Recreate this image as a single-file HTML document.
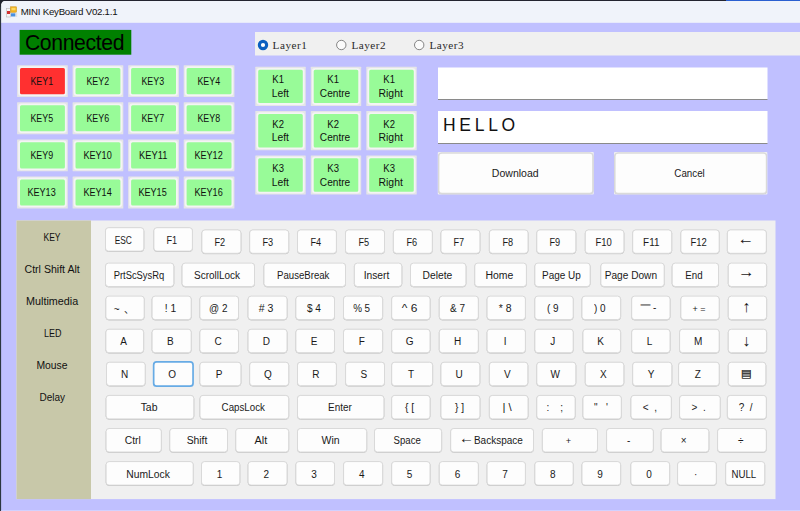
<!DOCTYPE html>
<html><head><meta charset="utf-8"><title>MINI KeyBoard V02.1.1</title>
<style>
html,body{margin:0;padding:0;}
body{width:800px;height:511px;overflow:hidden;position:relative;background:#c0c0ff;font-family:"Liberation Sans","Noto Sans CJK SC",sans-serif;font-size:10px;color:#111;}
div{box-sizing:border-box;}
.abs{position:absolute;}
#shapes{position:absolute;left:0;top:0;}
#ttext{left:20.8px;top:5.6px;font-size:9.7px;line-height:12px;color:#111;white-space:nowrap;letter-spacing:-0.25px;}
#conn{left:19.5px;top:30px;width:111.5px;height:24.5px;color:#000;font-size:21.2px;line-height:26.4px;white-space:nowrap;padding-left:5.4px;letter-spacing:-0.36px;overflow:hidden;}
.rl{position:absolute;top:38.5px;font-family:"Liberation Serif",serif;font-size:11.2px;line-height:13px;color:#2a2a2a;white-space:nowrap;letter-spacing:0.5px;}
.gk{position:absolute;display:flex;align-items:center;justify-content:center;text-align:center;color:#101010;padding:1.6px 1.2px 0 0;font-size:10px;line-height:13.9px;white-space:nowrap;}
.wb{position:absolute;padding-right:2px;display:flex;align-items:center;justify-content:center;font-size:10px;color:#1a1a1a;white-space:nowrap;}
.sl{position:absolute;left:15px;width:74.5px;text-align:center;font-size:10px;line-height:12px;color:#111;white-space:nowrap;}
.k{position:absolute;padding:2.2px 2.4px 0 0;display:flex;align-items:center;justify-content:center;font-size:10px;color:#1a1a1a;white-space:nowrap;line-height:12px;}
.k b{font-weight:normal;display:inline-block;line-height:0;position:relative;}
.ar{font-size:16.5px;top:-4.7px;}
.av{font-size:16px;top:-1.6px;}
.ab{font-size:15px;top:-3.2px;}
.mn{font-family:"DejaVu Sans",sans-serif;font-size:11px;color:#3a3a3a;top:-1px;left:0.4px;text-shadow:0 0.45px 0 #666,0 -0.45px 0 #666;}
</style></head><body>
<svg id="shapes" width="800" height="511" viewBox="0 0 800 511">
<rect x="0" y="0" width="800" height="1" fill="#23232f"/>
<rect x="726" y="0" width="74" height="1" fill="#2a5fd0"/>
<rect x="1" y="1" width="799" height="21.8" fill="#f0f3fa"/>
<rect x="0" y="0" width="1.1" height="511" fill="#2c3640"/>
<path d="M0 0 H7 A6.5 6.5 0 0 0 0.6 7 L0 7 Z" fill="#20242e"/>
<rect x="19.6" y="29.9" width="111.7" height="24.8" fill="#008000"/>
<rect x="255" y="32" width="545" height="23.5" fill="#f0f0f0"/>
<circle cx="263" cy="45" r="3.65" fill="#fff" stroke="#0a5fc0" stroke-width="3.1"/>
<circle cx="341.3" cy="45" r="4.7" fill="#fbfbfb" stroke="#777" stroke-width="0.9"/>
<circle cx="419.2" cy="45" r="4.7" fill="#fbfbfb" stroke="#777" stroke-width="0.9"/>
<rect x="17.1" y="65.2" width="50.7" height="31.9" rx="0.5" fill="#e5e5e8"/>
<rect x="19.1" y="67.2" width="46.7" height="27.9" rx="2.4" fill="#ff3030" stroke="#f4f4f4" stroke-width="1.8"/>
<rect x="72.6" y="65.2" width="50.7" height="31.9" rx="0.5" fill="#e5e5e8"/>
<rect x="74.6" y="67.2" width="46.7" height="27.9" rx="2.4" fill="#98fb98" stroke="#f4f4f4" stroke-width="1.8"/>
<rect x="128.2" y="65.2" width="50.7" height="31.9" rx="0.5" fill="#e5e5e8"/>
<rect x="130.2" y="67.2" width="46.7" height="27.9" rx="2.4" fill="#98fb98" stroke="#f4f4f4" stroke-width="1.8"/>
<rect x="183.7" y="65.2" width="50.7" height="31.9" rx="0.5" fill="#e5e5e8"/>
<rect x="185.7" y="67.2" width="46.7" height="27.9" rx="2.4" fill="#98fb98" stroke="#f4f4f4" stroke-width="1.8"/>
<rect x="17.1" y="102.3" width="50.7" height="31.9" rx="0.5" fill="#e5e5e8"/>
<rect x="19.1" y="104.3" width="46.7" height="27.9" rx="2.4" fill="#98fb98" stroke="#f4f4f4" stroke-width="1.8"/>
<rect x="72.6" y="102.3" width="50.7" height="31.9" rx="0.5" fill="#e5e5e8"/>
<rect x="74.6" y="104.3" width="46.7" height="27.9" rx="2.4" fill="#98fb98" stroke="#f4f4f4" stroke-width="1.8"/>
<rect x="128.2" y="102.3" width="50.7" height="31.9" rx="0.5" fill="#e5e5e8"/>
<rect x="130.2" y="104.3" width="46.7" height="27.9" rx="2.4" fill="#98fb98" stroke="#f4f4f4" stroke-width="1.8"/>
<rect x="183.7" y="102.3" width="50.7" height="31.9" rx="0.5" fill="#e5e5e8"/>
<rect x="185.7" y="104.3" width="46.7" height="27.9" rx="2.4" fill="#98fb98" stroke="#f4f4f4" stroke-width="1.8"/>
<rect x="17.1" y="139.4" width="50.7" height="31.9" rx="0.5" fill="#e5e5e8"/>
<rect x="19.1" y="141.4" width="46.7" height="27.9" rx="2.4" fill="#98fb98" stroke="#f4f4f4" stroke-width="1.8"/>
<rect x="72.6" y="139.4" width="50.7" height="31.9" rx="0.5" fill="#e5e5e8"/>
<rect x="74.6" y="141.4" width="46.7" height="27.9" rx="2.4" fill="#98fb98" stroke="#f4f4f4" stroke-width="1.8"/>
<rect x="128.2" y="139.4" width="50.7" height="31.9" rx="0.5" fill="#e5e5e8"/>
<rect x="130.2" y="141.4" width="46.7" height="27.9" rx="2.4" fill="#98fb98" stroke="#f4f4f4" stroke-width="1.8"/>
<rect x="183.7" y="139.4" width="50.7" height="31.9" rx="0.5" fill="#e5e5e8"/>
<rect x="185.7" y="141.4" width="46.7" height="27.9" rx="2.4" fill="#98fb98" stroke="#f4f4f4" stroke-width="1.8"/>
<rect x="17.1" y="176.5" width="50.7" height="31.9" rx="0.5" fill="#e5e5e8"/>
<rect x="19.1" y="178.5" width="46.7" height="27.9" rx="2.4" fill="#98fb98" stroke="#f4f4f4" stroke-width="1.8"/>
<rect x="72.6" y="176.5" width="50.7" height="31.9" rx="0.5" fill="#e5e5e8"/>
<rect x="74.6" y="178.5" width="46.7" height="27.9" rx="2.4" fill="#98fb98" stroke="#f4f4f4" stroke-width="1.8"/>
<rect x="128.2" y="176.5" width="50.7" height="31.9" rx="0.5" fill="#e5e5e8"/>
<rect x="130.2" y="178.5" width="46.7" height="27.9" rx="2.4" fill="#98fb98" stroke="#f4f4f4" stroke-width="1.8"/>
<rect x="183.7" y="176.5" width="50.7" height="31.9" rx="0.5" fill="#e5e5e8"/>
<rect x="185.7" y="178.5" width="46.7" height="27.9" rx="2.4" fill="#98fb98" stroke="#f4f4f4" stroke-width="1.8"/>
<rect x="255.3" y="66.8" width="50.4" height="39.2" rx="0.5" fill="#e5e5e8"/>
<rect x="257.3" y="68.8" width="46.4" height="35.2" rx="2.4" fill="#98fb98" stroke="#f4f4f4" stroke-width="1.8"/>
<rect x="310.8" y="66.8" width="50.4" height="39.2" rx="0.5" fill="#e5e5e8"/>
<rect x="312.8" y="68.8" width="46.4" height="35.2" rx="2.4" fill="#98fb98" stroke="#f4f4f4" stroke-width="1.8"/>
<rect x="366.3" y="66.8" width="50.4" height="39.2" rx="0.5" fill="#e5e5e8"/>
<rect x="368.3" y="68.8" width="46.4" height="35.2" rx="2.4" fill="#98fb98" stroke="#f4f4f4" stroke-width="1.8"/>
<rect x="255.3" y="111.1" width="50.4" height="39.2" rx="0.5" fill="#e5e5e8"/>
<rect x="257.3" y="113.1" width="46.4" height="35.2" rx="2.4" fill="#98fb98" stroke="#f4f4f4" stroke-width="1.8"/>
<rect x="310.8" y="111.1" width="50.4" height="39.2" rx="0.5" fill="#e5e5e8"/>
<rect x="312.8" y="113.1" width="46.4" height="35.2" rx="2.4" fill="#98fb98" stroke="#f4f4f4" stroke-width="1.8"/>
<rect x="366.3" y="111.1" width="50.4" height="39.2" rx="0.5" fill="#e5e5e8"/>
<rect x="368.3" y="113.1" width="46.4" height="35.2" rx="2.4" fill="#98fb98" stroke="#f4f4f4" stroke-width="1.8"/>
<rect x="255.3" y="155.4" width="50.4" height="39.2" rx="0.5" fill="#e5e5e8"/>
<rect x="257.3" y="157.4" width="46.4" height="35.2" rx="2.4" fill="#98fb98" stroke="#f4f4f4" stroke-width="1.8"/>
<rect x="310.8" y="155.4" width="50.4" height="39.2" rx="0.5" fill="#e5e5e8"/>
<rect x="312.8" y="157.4" width="46.4" height="35.2" rx="2.4" fill="#98fb98" stroke="#f4f4f4" stroke-width="1.8"/>
<rect x="366.3" y="155.4" width="50.4" height="39.2" rx="0.5" fill="#e5e5e8"/>
<rect x="368.3" y="157.4" width="46.4" height="35.2" rx="2.4" fill="#98fb98" stroke="#f4f4f4" stroke-width="1.8"/>
<rect x="438" y="67.5" width="329.5" height="31.7" fill="#ffffff"/>
<rect x="438" y="99.0" width="329.5" height="1.0" fill="#8a8a8a"/>
<rect x="438" y="111" width="329.5" height="32.2" fill="#ffffff"/>
<rect x="438" y="143.0" width="329.5" height="1.0" fill="#8a8a8a"/>
<rect x="437.8" y="152.1" width="156.0" height="42.5" rx="0.8" fill="#eeeef2"/>
<rect x="438.8" y="153.4" width="154.0" height="40.3" rx="3" fill="none" stroke="#c8c8c8" stroke-width="1.2"/>
<rect x="438.8" y="153.1" width="154.0" height="40.3" rx="3" fill="#fdfdfd" stroke="#dadada" stroke-width="1.2"/>
<rect x="614" y="152.1" width="153.4" height="42.5" rx="0.8" fill="#eeeef2"/>
<rect x="615.0" y="153.4" width="151.4" height="40.3" rx="3" fill="none" stroke="#c8c8c8" stroke-width="1.2"/>
<rect x="615.0" y="153.1" width="151.4" height="40.3" rx="3" fill="#fdfdfd" stroke="#dadada" stroke-width="1.2"/>
<rect x="16.5" y="220.5" width="759" height="278.6" fill="#f0f0f0"/>
<rect x="16.5" y="220.5" width="74.5" height="278.6" fill="#c8c8a9"/>
<rect x="1" y="510.4" width="799" height="0.6" fill="#dcdcff"/>
<rect x="105.5" y="228.1" width="38.3" height="23.4" rx="3" fill="none" stroke="#c2c2c2" stroke-width="1"/>
<rect x="105.5" y="227.7" width="38.3" height="23.4" rx="3" fill="#fdfdfd" stroke="#d9d9d9" stroke-width="1"/>
<rect x="153.9" y="228.1" width="38.5" height="23.4" rx="3" fill="none" stroke="#c2c2c2" stroke-width="1"/>
<rect x="153.9" y="227.7" width="38.5" height="23.4" rx="3" fill="#fdfdfd" stroke="#d9d9d9" stroke-width="1"/>
<rect x="201.9" y="230.3" width="39.0" height="23.4" rx="3" fill="none" stroke="#c2c2c2" stroke-width="1"/>
<rect x="201.9" y="229.9" width="39.0" height="23.4" rx="3" fill="#fdfdfd" stroke="#d9d9d9" stroke-width="1"/>
<rect x="249.7" y="230.3" width="39.0" height="23.4" rx="3" fill="none" stroke="#c2c2c2" stroke-width="1"/>
<rect x="249.7" y="229.9" width="39.0" height="23.4" rx="3" fill="#fdfdfd" stroke="#d9d9d9" stroke-width="1"/>
<rect x="297.5" y="230.3" width="38.9" height="23.4" rx="3" fill="none" stroke="#c2c2c2" stroke-width="1"/>
<rect x="297.5" y="229.9" width="38.9" height="23.4" rx="3" fill="#fdfdfd" stroke="#d9d9d9" stroke-width="1"/>
<rect x="345.5" y="230.3" width="39.0" height="23.4" rx="3" fill="none" stroke="#c2c2c2" stroke-width="1"/>
<rect x="345.5" y="229.9" width="39.0" height="23.4" rx="3" fill="#fdfdfd" stroke="#d9d9d9" stroke-width="1"/>
<rect x="393.4" y="230.3" width="38.9" height="23.4" rx="3" fill="none" stroke="#c2c2c2" stroke-width="1"/>
<rect x="393.4" y="229.9" width="38.9" height="23.4" rx="3" fill="#fdfdfd" stroke="#d9d9d9" stroke-width="1"/>
<rect x="441.0" y="230.3" width="38.9" height="23.4" rx="3" fill="none" stroke="#c2c2c2" stroke-width="1"/>
<rect x="441.0" y="229.9" width="38.9" height="23.4" rx="3" fill="#fdfdfd" stroke="#d9d9d9" stroke-width="1"/>
<rect x="489.4" y="230.3" width="38.6" height="23.4" rx="3" fill="none" stroke="#c2c2c2" stroke-width="1"/>
<rect x="489.4" y="229.9" width="38.6" height="23.4" rx="3" fill="#fdfdfd" stroke="#d9d9d9" stroke-width="1"/>
<rect x="536.8" y="230.3" width="39.0" height="23.4" rx="3" fill="none" stroke="#c2c2c2" stroke-width="1"/>
<rect x="536.8" y="229.9" width="39.0" height="23.4" rx="3" fill="#fdfdfd" stroke="#d9d9d9" stroke-width="1"/>
<rect x="585.3" y="230.3" width="38.6" height="23.4" rx="3" fill="none" stroke="#c2c2c2" stroke-width="1"/>
<rect x="585.3" y="229.9" width="38.6" height="23.4" rx="3" fill="#fdfdfd" stroke="#d9d9d9" stroke-width="1"/>
<rect x="632.7" y="230.3" width="39.0" height="23.4" rx="3" fill="none" stroke="#c2c2c2" stroke-width="1"/>
<rect x="632.7" y="229.9" width="39.0" height="23.4" rx="3" fill="#fdfdfd" stroke="#d9d9d9" stroke-width="1"/>
<rect x="680.9" y="230.3" width="38.3" height="23.4" rx="3" fill="none" stroke="#c2c2c2" stroke-width="1"/>
<rect x="680.9" y="229.9" width="38.3" height="23.4" rx="3" fill="#fdfdfd" stroke="#d9d9d9" stroke-width="1"/>
<rect x="727.4" y="230.3" width="38.9" height="23.4" rx="3" fill="none" stroke="#c2c2c2" stroke-width="1"/>
<rect x="727.4" y="229.9" width="38.9" height="23.4" rx="3" fill="#fdfdfd" stroke="#d9d9d9" stroke-width="1"/>
<rect x="105.5" y="263.5" width="68.3" height="23.4" rx="3" fill="none" stroke="#c2c2c2" stroke-width="1"/>
<rect x="105.5" y="263.1" width="68.3" height="23.4" rx="3" fill="#fdfdfd" stroke="#d9d9d9" stroke-width="1"/>
<rect x="182.1" y="263.5" width="72.4" height="23.4" rx="3" fill="none" stroke="#c2c2c2" stroke-width="1"/>
<rect x="182.1" y="263.1" width="72.4" height="23.4" rx="3" fill="#fdfdfd" stroke="#d9d9d9" stroke-width="1"/>
<rect x="264.0" y="263.5" width="81.5" height="23.4" rx="3" fill="none" stroke="#c2c2c2" stroke-width="1"/>
<rect x="264.0" y="263.1" width="81.5" height="23.4" rx="3" fill="#fdfdfd" stroke="#d9d9d9" stroke-width="1"/>
<rect x="354.4" y="263.5" width="47.4" height="23.4" rx="3" fill="none" stroke="#c2c2c2" stroke-width="1"/>
<rect x="354.4" y="263.1" width="47.4" height="23.4" rx="3" fill="#fdfdfd" stroke="#d9d9d9" stroke-width="1"/>
<rect x="410.5" y="263.5" width="55.4" height="23.4" rx="3" fill="none" stroke="#c2c2c2" stroke-width="1"/>
<rect x="410.5" y="263.1" width="55.4" height="23.4" rx="3" fill="#fdfdfd" stroke="#d9d9d9" stroke-width="1"/>
<rect x="474.8" y="263.5" width="51.6" height="23.4" rx="3" fill="none" stroke="#c2c2c2" stroke-width="1"/>
<rect x="474.8" y="263.1" width="51.6" height="23.4" rx="3" fill="#fdfdfd" stroke="#d9d9d9" stroke-width="1"/>
<rect x="534.9" y="263.5" width="55.2" height="23.4" rx="3" fill="none" stroke="#c2c2c2" stroke-width="1"/>
<rect x="534.9" y="263.1" width="55.2" height="23.4" rx="3" fill="#fdfdfd" stroke="#d9d9d9" stroke-width="1"/>
<rect x="600.9" y="263.5" width="63.3" height="23.4" rx="3" fill="none" stroke="#c2c2c2" stroke-width="1"/>
<rect x="600.9" y="263.1" width="63.3" height="23.4" rx="3" fill="#fdfdfd" stroke="#d9d9d9" stroke-width="1"/>
<rect x="672.2" y="263.5" width="46.3" height="23.4" rx="3" fill="none" stroke="#c2c2c2" stroke-width="1"/>
<rect x="672.2" y="263.1" width="46.3" height="23.4" rx="3" fill="#fdfdfd" stroke="#d9d9d9" stroke-width="1"/>
<rect x="728.3" y="263.5" width="38.3" height="23.4" rx="3" fill="none" stroke="#c2c2c2" stroke-width="1"/>
<rect x="728.3" y="263.1" width="38.3" height="23.4" rx="3" fill="#fdfdfd" stroke="#d9d9d9" stroke-width="1"/>
<rect x="105.9" y="296.5" width="38.3" height="23.5" rx="3" fill="none" stroke="#c2c2c2" stroke-width="1"/>
<rect x="105.9" y="296.1" width="38.3" height="23.5" rx="3" fill="#fdfdfd" stroke="#d9d9d9" stroke-width="1"/>
<rect x="152.1" y="296.5" width="39.1" height="23.5" rx="3" fill="none" stroke="#c2c2c2" stroke-width="1"/>
<rect x="152.1" y="296.1" width="39.1" height="23.5" rx="3" fill="#fdfdfd" stroke="#d9d9d9" stroke-width="1"/>
<rect x="199.9" y="296.5" width="38.6" height="23.5" rx="3" fill="none" stroke="#c2c2c2" stroke-width="1"/>
<rect x="199.9" y="296.1" width="38.6" height="23.5" rx="3" fill="#fdfdfd" stroke="#d9d9d9" stroke-width="1"/>
<rect x="248.1" y="296.5" width="38.9" height="23.5" rx="3" fill="none" stroke="#c2c2c2" stroke-width="1"/>
<rect x="248.1" y="296.1" width="38.9" height="23.5" rx="3" fill="#fdfdfd" stroke="#d9d9d9" stroke-width="1"/>
<rect x="295.9" y="296.5" width="38.6" height="23.5" rx="3" fill="none" stroke="#c2c2c2" stroke-width="1"/>
<rect x="295.9" y="296.1" width="38.6" height="23.5" rx="3" fill="#fdfdfd" stroke="#d9d9d9" stroke-width="1"/>
<rect x="343.5" y="296.5" width="39.1" height="23.5" rx="3" fill="none" stroke="#c2c2c2" stroke-width="1"/>
<rect x="343.5" y="296.1" width="39.1" height="23.5" rx="3" fill="#fdfdfd" stroke="#d9d9d9" stroke-width="1"/>
<rect x="391.7" y="296.5" width="38.3" height="23.5" rx="3" fill="none" stroke="#c2c2c2" stroke-width="1"/>
<rect x="391.7" y="296.1" width="38.3" height="23.5" rx="3" fill="#fdfdfd" stroke="#d9d9d9" stroke-width="1"/>
<rect x="439.3" y="296.5" width="39.0" height="23.5" rx="3" fill="none" stroke="#c2c2c2" stroke-width="1"/>
<rect x="439.3" y="296.1" width="39.0" height="23.5" rx="3" fill="#fdfdfd" stroke="#d9d9d9" stroke-width="1"/>
<rect x="487.1" y="296.5" width="38.3" height="23.5" rx="3" fill="none" stroke="#c2c2c2" stroke-width="1"/>
<rect x="487.1" y="296.1" width="38.3" height="23.5" rx="3" fill="#fdfdfd" stroke="#d9d9d9" stroke-width="1"/>
<rect x="534.9" y="296.5" width="38.3" height="23.5" rx="3" fill="none" stroke="#c2c2c2" stroke-width="1"/>
<rect x="534.9" y="296.1" width="38.3" height="23.5" rx="3" fill="#fdfdfd" stroke="#d9d9d9" stroke-width="1"/>
<rect x="582.0" y="296.5" width="38.6" height="23.5" rx="3" fill="none" stroke="#c2c2c2" stroke-width="1"/>
<rect x="582.0" y="296.1" width="38.6" height="23.5" rx="3" fill="#fdfdfd" stroke="#d9d9d9" stroke-width="1"/>
<rect x="631.7" y="296.5" width="38.3" height="23.5" rx="3" fill="none" stroke="#c2c2c2" stroke-width="1"/>
<rect x="631.7" y="296.1" width="38.3" height="23.5" rx="3" fill="#fdfdfd" stroke="#d9d9d9" stroke-width="1"/>
<rect x="680.9" y="296.5" width="38.3" height="23.5" rx="3" fill="none" stroke="#c2c2c2" stroke-width="1"/>
<rect x="680.9" y="296.1" width="38.3" height="23.5" rx="3" fill="#fdfdfd" stroke="#d9d9d9" stroke-width="1"/>
<rect x="728.3" y="296.5" width="38.3" height="23.5" rx="3" fill="none" stroke="#c2c2c2" stroke-width="1"/>
<rect x="728.3" y="296.1" width="38.3" height="23.5" rx="3" fill="#fdfdfd" stroke="#d9d9d9" stroke-width="1"/>
<rect x="105.9" y="329.6" width="37.7" height="23.5" rx="3" fill="none" stroke="#c2c2c2" stroke-width="1"/>
<rect x="105.9" y="329.2" width="37.7" height="23.5" rx="3" fill="#fdfdfd" stroke="#d9d9d9" stroke-width="1"/>
<rect x="152.1" y="329.6" width="39.1" height="23.5" rx="3" fill="none" stroke="#c2c2c2" stroke-width="1"/>
<rect x="152.1" y="329.2" width="39.1" height="23.5" rx="3" fill="#fdfdfd" stroke="#d9d9d9" stroke-width="1"/>
<rect x="199.9" y="329.6" width="38.6" height="23.5" rx="3" fill="none" stroke="#c2c2c2" stroke-width="1"/>
<rect x="199.9" y="329.2" width="38.6" height="23.5" rx="3" fill="#fdfdfd" stroke="#d9d9d9" stroke-width="1"/>
<rect x="248.1" y="329.6" width="38.9" height="23.5" rx="3" fill="none" stroke="#c2c2c2" stroke-width="1"/>
<rect x="248.1" y="329.2" width="38.9" height="23.5" rx="3" fill="#fdfdfd" stroke="#d9d9d9" stroke-width="1"/>
<rect x="295.9" y="329.6" width="38.6" height="23.5" rx="3" fill="none" stroke="#c2c2c2" stroke-width="1"/>
<rect x="295.9" y="329.2" width="38.6" height="23.5" rx="3" fill="#fdfdfd" stroke="#d9d9d9" stroke-width="1"/>
<rect x="343.5" y="329.6" width="39.1" height="23.5" rx="3" fill="none" stroke="#c2c2c2" stroke-width="1"/>
<rect x="343.5" y="329.2" width="39.1" height="23.5" rx="3" fill="#fdfdfd" stroke="#d9d9d9" stroke-width="1"/>
<rect x="391.7" y="329.6" width="38.3" height="23.5" rx="3" fill="none" stroke="#c2c2c2" stroke-width="1"/>
<rect x="391.7" y="329.2" width="38.3" height="23.5" rx="3" fill="#fdfdfd" stroke="#d9d9d9" stroke-width="1"/>
<rect x="439.3" y="329.6" width="39.0" height="23.5" rx="3" fill="none" stroke="#c2c2c2" stroke-width="1"/>
<rect x="439.3" y="329.2" width="39.0" height="23.5" rx="3" fill="#fdfdfd" stroke="#d9d9d9" stroke-width="1"/>
<rect x="487.1" y="329.6" width="38.3" height="23.5" rx="3" fill="none" stroke="#c2c2c2" stroke-width="1"/>
<rect x="487.1" y="329.2" width="38.3" height="23.5" rx="3" fill="#fdfdfd" stroke="#d9d9d9" stroke-width="1"/>
<rect x="534.9" y="329.6" width="38.3" height="23.5" rx="3" fill="none" stroke="#c2c2c2" stroke-width="1"/>
<rect x="534.9" y="329.2" width="38.3" height="23.5" rx="3" fill="#fdfdfd" stroke="#d9d9d9" stroke-width="1"/>
<rect x="583.0" y="329.6" width="37.6" height="23.5" rx="3" fill="none" stroke="#c2c2c2" stroke-width="1"/>
<rect x="583.0" y="329.2" width="37.6" height="23.5" rx="3" fill="#fdfdfd" stroke="#d9d9d9" stroke-width="1"/>
<rect x="631.7" y="329.6" width="38.3" height="23.5" rx="3" fill="none" stroke="#c2c2c2" stroke-width="1"/>
<rect x="631.7" y="329.2" width="38.3" height="23.5" rx="3" fill="#fdfdfd" stroke="#d9d9d9" stroke-width="1"/>
<rect x="679.6" y="329.6" width="39.6" height="23.5" rx="3" fill="none" stroke="#c2c2c2" stroke-width="1"/>
<rect x="679.6" y="329.2" width="39.6" height="23.5" rx="3" fill="#fdfdfd" stroke="#d9d9d9" stroke-width="1"/>
<rect x="728.3" y="329.6" width="38.3" height="23.5" rx="3" fill="none" stroke="#c2c2c2" stroke-width="1"/>
<rect x="728.3" y="329.2" width="38.3" height="23.5" rx="3" fill="#fdfdfd" stroke="#d9d9d9" stroke-width="1"/>
<rect x="106.5" y="362.6" width="38.7" height="23.5" rx="3" fill="none" stroke="#c2c2c2" stroke-width="1"/>
<rect x="106.5" y="362.2" width="38.7" height="23.5" rx="3" fill="#fdfdfd" stroke="#d9d9d9" stroke-width="1"/>
<rect x="153.65" y="361.95" width="39.4" height="24.2" rx="3" fill="#fdfdfd" stroke="#67abe5" stroke-width="1.7"/>
<rect x="199.9" y="362.6" width="41.0" height="23.5" rx="3" fill="none" stroke="#c2c2c2" stroke-width="1"/>
<rect x="199.9" y="362.2" width="41.0" height="23.5" rx="3" fill="#fdfdfd" stroke="#d9d9d9" stroke-width="1"/>
<rect x="249.7" y="362.6" width="39.0" height="23.5" rx="3" fill="none" stroke="#c2c2c2" stroke-width="1"/>
<rect x="249.7" y="362.2" width="39.0" height="23.5" rx="3" fill="#fdfdfd" stroke="#d9d9d9" stroke-width="1"/>
<rect x="297.5" y="362.6" width="38.9" height="23.5" rx="3" fill="none" stroke="#c2c2c2" stroke-width="1"/>
<rect x="297.5" y="362.2" width="38.9" height="23.5" rx="3" fill="#fdfdfd" stroke="#d9d9d9" stroke-width="1"/>
<rect x="345.6" y="362.6" width="38.9" height="23.5" rx="3" fill="none" stroke="#c2c2c2" stroke-width="1"/>
<rect x="345.6" y="362.2" width="38.9" height="23.5" rx="3" fill="#fdfdfd" stroke="#d9d9d9" stroke-width="1"/>
<rect x="391.7" y="362.6" width="40.9" height="23.5" rx="3" fill="none" stroke="#c2c2c2" stroke-width="1"/>
<rect x="391.7" y="362.2" width="40.9" height="23.5" rx="3" fill="#fdfdfd" stroke="#d9d9d9" stroke-width="1"/>
<rect x="441.0" y="362.6" width="38.8" height="23.5" rx="3" fill="none" stroke="#c2c2c2" stroke-width="1"/>
<rect x="441.0" y="362.2" width="38.8" height="23.5" rx="3" fill="#fdfdfd" stroke="#d9d9d9" stroke-width="1"/>
<rect x="489.4" y="362.6" width="38.4" height="23.5" rx="3" fill="none" stroke="#c2c2c2" stroke-width="1"/>
<rect x="489.4" y="362.2" width="38.4" height="23.5" rx="3" fill="#fdfdfd" stroke="#d9d9d9" stroke-width="1"/>
<rect x="536.8" y="362.6" width="39.0" height="23.5" rx="3" fill="none" stroke="#c2c2c2" stroke-width="1"/>
<rect x="536.8" y="362.2" width="39.0" height="23.5" rx="3" fill="#fdfdfd" stroke="#d9d9d9" stroke-width="1"/>
<rect x="585.3" y="362.6" width="38.5" height="23.5" rx="3" fill="none" stroke="#c2c2c2" stroke-width="1"/>
<rect x="585.3" y="362.2" width="38.5" height="23.5" rx="3" fill="#fdfdfd" stroke="#d9d9d9" stroke-width="1"/>
<rect x="632.7" y="362.6" width="39.1" height="23.5" rx="3" fill="none" stroke="#c2c2c2" stroke-width="1"/>
<rect x="632.7" y="362.2" width="39.1" height="23.5" rx="3" fill="#fdfdfd" stroke="#d9d9d9" stroke-width="1"/>
<rect x="678.6" y="362.6" width="40.6" height="23.5" rx="3" fill="none" stroke="#c2c2c2" stroke-width="1"/>
<rect x="678.6" y="362.2" width="40.6" height="23.5" rx="3" fill="#fdfdfd" stroke="#d9d9d9" stroke-width="1"/>
<rect x="728.3" y="362.6" width="37.5" height="23.5" rx="3" fill="none" stroke="#c2c2c2" stroke-width="1"/>
<rect x="728.3" y="362.2" width="37.5" height="23.5" rx="3" fill="#fdfdfd" stroke="#d9d9d9" stroke-width="1"/>
<rect x="106.1" y="395.8" width="87.7" height="23.5" rx="3" fill="none" stroke="#c2c2c2" stroke-width="1"/>
<rect x="106.1" y="395.4" width="87.7" height="23.5" rx="3" fill="#fdfdfd" stroke="#d9d9d9" stroke-width="1"/>
<rect x="200.0" y="395.8" width="88.7" height="23.5" rx="3" fill="none" stroke="#c2c2c2" stroke-width="1"/>
<rect x="200.0" y="395.4" width="88.7" height="23.5" rx="3" fill="#fdfdfd" stroke="#d9d9d9" stroke-width="1"/>
<rect x="297.5" y="395.8" width="86.4" height="23.5" rx="3" fill="none" stroke="#c2c2c2" stroke-width="1"/>
<rect x="297.5" y="395.4" width="86.4" height="23.5" rx="3" fill="#fdfdfd" stroke="#d9d9d9" stroke-width="1"/>
<rect x="391.7" y="395.8" width="38.3" height="23.5" rx="3" fill="none" stroke="#c2c2c2" stroke-width="1"/>
<rect x="391.7" y="395.4" width="38.3" height="23.5" rx="3" fill="#fdfdfd" stroke="#d9d9d9" stroke-width="1"/>
<rect x="441.0" y="395.8" width="38.9" height="23.5" rx="3" fill="none" stroke="#c2c2c2" stroke-width="1"/>
<rect x="441.0" y="395.4" width="38.9" height="23.5" rx="3" fill="#fdfdfd" stroke="#d9d9d9" stroke-width="1"/>
<rect x="489.4" y="395.8" width="38.6" height="23.5" rx="3" fill="none" stroke="#c2c2c2" stroke-width="1"/>
<rect x="489.4" y="395.4" width="38.6" height="23.5" rx="3" fill="#fdfdfd" stroke="#d9d9d9" stroke-width="1"/>
<rect x="536.8" y="395.8" width="38.3" height="23.5" rx="3" fill="none" stroke="#c2c2c2" stroke-width="1"/>
<rect x="536.8" y="395.4" width="38.3" height="23.5" rx="3" fill="#fdfdfd" stroke="#d9d9d9" stroke-width="1"/>
<rect x="583.0" y="395.8" width="38.3" height="23.5" rx="3" fill="none" stroke="#c2c2c2" stroke-width="1"/>
<rect x="583.0" y="395.4" width="38.3" height="23.5" rx="3" fill="#fdfdfd" stroke="#d9d9d9" stroke-width="1"/>
<rect x="631.0" y="395.8" width="40.3" height="23.5" rx="3" fill="none" stroke="#c2c2c2" stroke-width="1"/>
<rect x="631.0" y="395.4" width="40.3" height="23.5" rx="3" fill="#fdfdfd" stroke="#d9d9d9" stroke-width="1"/>
<rect x="679.6" y="395.8" width="40.6" height="23.5" rx="3" fill="none" stroke="#c2c2c2" stroke-width="1"/>
<rect x="679.6" y="395.4" width="40.6" height="23.5" rx="3" fill="#fdfdfd" stroke="#d9d9d9" stroke-width="1"/>
<rect x="727.4" y="395.8" width="38.9" height="23.5" rx="3" fill="none" stroke="#c2c2c2" stroke-width="1"/>
<rect x="727.4" y="395.4" width="38.9" height="23.5" rx="3" fill="#fdfdfd" stroke="#d9d9d9" stroke-width="1"/>
<rect x="106.1" y="428.9" width="55.2" height="23.5" rx="3" fill="none" stroke="#c2c2c2" stroke-width="1"/>
<rect x="106.1" y="428.5" width="55.2" height="23.5" rx="3" fill="#fdfdfd" stroke="#d9d9d9" stroke-width="1"/>
<rect x="169.8" y="428.9" width="57.7" height="23.5" rx="3" fill="none" stroke="#c2c2c2" stroke-width="1"/>
<rect x="169.8" y="428.5" width="57.7" height="23.5" rx="3" fill="#fdfdfd" stroke="#d9d9d9" stroke-width="1"/>
<rect x="235.8" y="428.9" width="52.9" height="23.5" rx="3" fill="none" stroke="#c2c2c2" stroke-width="1"/>
<rect x="235.8" y="428.5" width="52.9" height="23.5" rx="3" fill="#fdfdfd" stroke="#d9d9d9" stroke-width="1"/>
<rect x="297.5" y="428.9" width="69.2" height="23.5" rx="3" fill="none" stroke="#c2c2c2" stroke-width="1"/>
<rect x="297.5" y="428.5" width="69.2" height="23.5" rx="3" fill="#fdfdfd" stroke="#d9d9d9" stroke-width="1"/>
<rect x="374.5" y="428.9" width="67.1" height="23.5" rx="3" fill="none" stroke="#c2c2c2" stroke-width="1"/>
<rect x="374.5" y="428.5" width="67.1" height="23.5" rx="3" fill="#fdfdfd" stroke="#d9d9d9" stroke-width="1"/>
<rect x="450.7" y="428.9" width="82.8" height="23.5" rx="3" fill="none" stroke="#c2c2c2" stroke-width="1"/>
<rect x="450.7" y="428.5" width="82.8" height="23.5" rx="3" fill="#fdfdfd" stroke="#d9d9d9" stroke-width="1"/>
<rect x="542.4" y="428.9" width="55.1" height="23.5" rx="3" fill="none" stroke="#c2c2c2" stroke-width="1"/>
<rect x="542.4" y="428.5" width="55.1" height="23.5" rx="3" fill="#fdfdfd" stroke="#d9d9d9" stroke-width="1"/>
<rect x="606.6" y="428.9" width="46.7" height="23.5" rx="3" fill="none" stroke="#c2c2c2" stroke-width="1"/>
<rect x="606.6" y="428.5" width="46.7" height="23.5" rx="3" fill="#fdfdfd" stroke="#d9d9d9" stroke-width="1"/>
<rect x="661.2" y="428.9" width="47.6" height="23.5" rx="3" fill="none" stroke="#c2c2c2" stroke-width="1"/>
<rect x="661.2" y="428.5" width="47.6" height="23.5" rx="3" fill="#fdfdfd" stroke="#d9d9d9" stroke-width="1"/>
<rect x="717.6" y="428.9" width="48.7" height="23.5" rx="3" fill="none" stroke="#c2c2c2" stroke-width="1"/>
<rect x="717.6" y="428.5" width="48.7" height="23.5" rx="3" fill="#fdfdfd" stroke="#d9d9d9" stroke-width="1"/>
<rect x="106.1" y="462.0" width="87.1" height="23.5" rx="3" fill="none" stroke="#c2c2c2" stroke-width="1"/>
<rect x="106.1" y="461.6" width="87.1" height="23.5" rx="3" fill="#fdfdfd" stroke="#d9d9d9" stroke-width="1"/>
<rect x="201.5" y="462.0" width="38.3" height="23.5" rx="3" fill="none" stroke="#c2c2c2" stroke-width="1"/>
<rect x="201.5" y="461.6" width="38.3" height="23.5" rx="3" fill="#fdfdfd" stroke="#d9d9d9" stroke-width="1"/>
<rect x="248.1" y="462.0" width="38.9" height="23.5" rx="3" fill="none" stroke="#c2c2c2" stroke-width="1"/>
<rect x="248.1" y="461.6" width="38.9" height="23.5" rx="3" fill="#fdfdfd" stroke="#d9d9d9" stroke-width="1"/>
<rect x="295.9" y="462.0" width="38.6" height="23.5" rx="3" fill="none" stroke="#c2c2c2" stroke-width="1"/>
<rect x="295.9" y="461.6" width="38.6" height="23.5" rx="3" fill="#fdfdfd" stroke="#d9d9d9" stroke-width="1"/>
<rect x="343.6" y="462.0" width="39.0" height="23.5" rx="3" fill="none" stroke="#c2c2c2" stroke-width="1"/>
<rect x="343.6" y="461.6" width="39.0" height="23.5" rx="3" fill="#fdfdfd" stroke="#d9d9d9" stroke-width="1"/>
<rect x="391.7" y="462.0" width="38.3" height="23.5" rx="3" fill="none" stroke="#c2c2c2" stroke-width="1"/>
<rect x="391.7" y="461.6" width="38.3" height="23.5" rx="3" fill="#fdfdfd" stroke="#d9d9d9" stroke-width="1"/>
<rect x="439.3" y="462.0" width="39.0" height="23.5" rx="3" fill="none" stroke="#c2c2c2" stroke-width="1"/>
<rect x="439.3" y="461.6" width="39.0" height="23.5" rx="3" fill="#fdfdfd" stroke="#d9d9d9" stroke-width="1"/>
<rect x="487.1" y="462.0" width="38.3" height="23.5" rx="3" fill="none" stroke="#c2c2c2" stroke-width="1"/>
<rect x="487.1" y="461.6" width="38.3" height="23.5" rx="3" fill="#fdfdfd" stroke="#d9d9d9" stroke-width="1"/>
<rect x="534.9" y="462.0" width="38.3" height="23.5" rx="3" fill="none" stroke="#c2c2c2" stroke-width="1"/>
<rect x="534.9" y="461.6" width="38.3" height="23.5" rx="3" fill="#fdfdfd" stroke="#d9d9d9" stroke-width="1"/>
<rect x="582.0" y="462.0" width="38.6" height="23.5" rx="3" fill="none" stroke="#c2c2c2" stroke-width="1"/>
<rect x="582.0" y="461.6" width="38.6" height="23.5" rx="3" fill="#fdfdfd" stroke="#d9d9d9" stroke-width="1"/>
<rect x="630.9" y="462.0" width="38.7" height="23.5" rx="3" fill="none" stroke="#c2c2c2" stroke-width="1"/>
<rect x="630.9" y="461.6" width="38.7" height="23.5" rx="3" fill="#fdfdfd" stroke="#d9d9d9" stroke-width="1"/>
<rect x="677.6" y="462.0" width="38.7" height="23.5" rx="3" fill="none" stroke="#c2c2c2" stroke-width="1"/>
<rect x="677.6" y="461.6" width="38.7" height="23.5" rx="3" fill="#fdfdfd" stroke="#d9d9d9" stroke-width="1"/>
<rect x="725.7" y="462.0" width="39.0" height="23.5" rx="3" fill="none" stroke="#c2c2c2" stroke-width="1"/>
<rect x="725.7" y="461.6" width="39.0" height="23.5" rx="3" fill="#fdfdfd" stroke="#d9d9d9" stroke-width="1"/>
</svg>
<svg class="abs" style="left:6.2px;top:5.8px" width="12" height="12" viewBox="0 0 12 12">
<rect x="0.5" y="2.5" width="4" height="8.5" fill="#f4f4f4" stroke="#b8b8b8" stroke-width="0.6"/>
<rect x="1" y="5" width="3" height="3" fill="#d03030"/>
<rect x="4.5" y="0.8" width="6" height="5.5" fill="#f0b020" stroke="#c89010" stroke-width="0.5"/>
<rect x="5.5" y="1.8" width="4" height="2.5" fill="#ffd860"/>
<rect x="5" y="7.3" width="4.5" height="3.2" fill="#4a90e0"/>
<rect x="9.6" y="6.5" width="1.6" height="4.5" fill="#e0e0e0"/>
</svg>
<div class="abs" id="ttext">MINI KeyBoard V02.1.1</div>
<div class="abs" id="conn">Connected</div>
<div class="rl" style="left:272.6px">Layer1</div><div class="rl" style="left:351.4px">Layer2</div><div class="rl" style="left:429.4px">Layer3</div>
<div class="gk" style="left:17.1px;top:65.2px;width:50.7px;height:31.9px"><span style="display:inline-block;transform:scaleX(0.886);">KEY1</span></div>
<div class="gk" style="left:72.6px;top:65.2px;width:50.7px;height:31.9px"><span style="display:inline-block;transform:scaleX(0.886);">KEY2</span></div>
<div class="gk" style="left:128.2px;top:65.2px;width:50.7px;height:31.9px"><span style="display:inline-block;transform:scaleX(0.886);">KEY3</span></div>
<div class="gk" style="left:183.7px;top:65.2px;width:50.7px;height:31.9px"><span style="display:inline-block;transform:scaleX(0.886);">KEY4</span></div>
<div class="gk" style="left:17.1px;top:102.3px;width:50.7px;height:31.9px"><span style="display:inline-block;transform:scaleX(0.886);">KEY5</span></div>
<div class="gk" style="left:72.6px;top:102.3px;width:50.7px;height:31.9px"><span style="display:inline-block;transform:scaleX(0.886);">KEY6</span></div>
<div class="gk" style="left:128.2px;top:102.3px;width:50.7px;height:31.9px"><span style="display:inline-block;transform:scaleX(0.886);">KEY7</span></div>
<div class="gk" style="left:183.7px;top:102.3px;width:50.7px;height:31.9px"><span style="display:inline-block;transform:scaleX(0.886);">KEY8</span></div>
<div class="gk" style="left:17.1px;top:139.4px;width:50.7px;height:31.9px"><span style="display:inline-block;transform:scaleX(0.886);">KEY9</span></div>
<div class="gk" style="left:72.6px;top:139.4px;width:50.7px;height:31.9px"><span style="display:inline-block;transform:scaleX(0.907);">KEY10</span></div>
<div class="gk" style="left:128.2px;top:139.4px;width:50.7px;height:31.9px"><span style="display:inline-block;transform:scaleX(0.93);">KEY11</span></div>
<div class="gk" style="left:183.7px;top:139.4px;width:50.7px;height:31.9px"><span style="display:inline-block;transform:scaleX(0.907);">KEY12</span></div>
<div class="gk" style="left:17.1px;top:176.5px;width:50.7px;height:31.9px"><span style="display:inline-block;transform:scaleX(0.907);">KEY13</span></div>
<div class="gk" style="left:72.6px;top:176.5px;width:50.7px;height:31.9px"><span style="display:inline-block;transform:scaleX(0.907);">KEY14</span></div>
<div class="gk" style="left:128.2px;top:176.5px;width:50.7px;height:31.9px"><span style="display:inline-block;transform:scaleX(0.907);">KEY15</span></div>
<div class="gk" style="left:183.7px;top:176.5px;width:50.7px;height:31.9px"><span style="display:inline-block;transform:scaleX(0.907);">KEY16</span></div>
<div class="gk" style="left:255.3px;top:66.8px;width:50.4px;height:39.2px"><span><span style="display:inline-block;transform:scaleX(0.951);position:relative;left:-1.8px;">K1</span><br><span style="display:inline-block;transform:scaleX(1.025);">Left</span></span></div>
<div class="gk" style="left:310.8px;top:66.8px;width:50.4px;height:39.2px"><span><span style="display:inline-block;transform:scaleX(0.951);position:relative;left:-1.8px;">K1</span><br><span style="display:inline-block;transform:scaleX(1.011);">Centre</span></span></div>
<div class="gk" style="left:366.3px;top:66.8px;width:50.4px;height:39.2px"><span><span style="display:inline-block;transform:scaleX(0.951);position:relative;left:-1.8px;">K1</span><br><span style="display:inline-block;transform:scaleX(1.039);">Right</span></span></div>
<div class="gk" style="left:255.3px;top:111.1px;width:50.4px;height:39.2px"><span><span style="display:inline-block;transform:scaleX(0.951);position:relative;left:-1.8px;">K2</span><br><span style="display:inline-block;transform:scaleX(1.025);">Left</span></span></div>
<div class="gk" style="left:310.8px;top:111.1px;width:50.4px;height:39.2px"><span><span style="display:inline-block;transform:scaleX(0.951);position:relative;left:-1.8px;">K2</span><br><span style="display:inline-block;transform:scaleX(1.011);">Centre</span></span></div>
<div class="gk" style="left:366.3px;top:111.1px;width:50.4px;height:39.2px"><span><span style="display:inline-block;transform:scaleX(0.951);position:relative;left:-1.8px;">K2</span><br><span style="display:inline-block;transform:scaleX(1.039);">Right</span></span></div>
<div class="gk" style="left:255.3px;top:155.4px;width:50.4px;height:39.2px"><span><span style="display:inline-block;transform:scaleX(0.951);position:relative;left:-1.8px;">K3</span><br><span style="display:inline-block;transform:scaleX(1.025);">Left</span></span></div>
<div class="gk" style="left:310.8px;top:155.4px;width:50.4px;height:39.2px"><span><span style="display:inline-block;transform:scaleX(0.951);position:relative;left:-1.8px;">K3</span><br><span style="display:inline-block;transform:scaleX(1.011);">Centre</span></span></div>
<div class="gk" style="left:366.3px;top:155.4px;width:50.4px;height:39.2px"><span><span style="display:inline-block;transform:scaleX(0.951);position:relative;left:-1.8px;">K3</span><br><span style="display:inline-block;transform:scaleX(1.039);">Right</span></span></div>
<div class="abs" style="left:443px;top:114.8px;font-size:17.5px;line-height:20px;letter-spacing:3.7px;color:#111;white-space:nowrap">HELLO</div>
<div class="wb" style="left:437.8px;top:152.1px;width:155.99999999999994px;height:42.5px"><span style="display:inline-block;transform:scaleX(1.053);">Download</span></div>
<div class="wb" style="left:614px;top:152.1px;width:153.39999999999998px;height:42.5px"><span style="display:inline-block;transform:scaleX(0.976);">Cancel</span></div>
<div class="sl" style="top:231.7px"><span style="display:inline-block;transform:scaleX(0.852);">KEY</span></div>
<div class="sl" style="top:263.7px"><span style="display:inline-block;transform:scaleX(1.058);">Ctrl Shift Alt</span></div>
<div class="sl" style="top:295.9px"><span style="display:inline-block;transform:scaleX(1.078);">Multimedia</span></div>
<div class="sl" style="top:327.7px"><span style="display:inline-block;transform:scaleX(0.897);">LED</span></div>
<div class="sl" style="top:359.9px"><span style="display:inline-block;transform:scaleX(1.038);">Mouse</span></div>
<div class="sl" style="top:392.2px"><span style="display:inline-block;transform:scaleX(1.0);">Delay</span></div>
<div class="k" style="left:105px;top:227.2px;width:39.3px;height:24.6px"><span style="display:inline-block;transform:scaleX(0.838);">ESC</span></div>
<div class="k" style="left:153.4px;top:227.2px;width:39.5px;height:24.6px"><span style="display:inline-block;transform:scaleX(0.915);">F1</span></div>
<div class="k" style="left:201.4px;top:229.4px;width:40.0px;height:24.6px"><span style="display:inline-block;transform:scaleX(0.915);">F2</span></div>
<div class="k" style="left:249.2px;top:229.4px;width:40.0px;height:24.6px"><span style="display:inline-block;transform:scaleX(0.915);">F3</span></div>
<div class="k" style="left:297px;top:229.4px;width:39.9px;height:24.6px"><span style="display:inline-block;transform:scaleX(0.915);">F4</span></div>
<div class="k" style="left:345px;top:229.4px;width:40.0px;height:24.6px"><span style="display:inline-block;transform:scaleX(0.915);">F5</span></div>
<div class="k" style="left:392.9px;top:229.4px;width:39.9px;height:24.6px"><span style="display:inline-block;transform:scaleX(0.915);">F6</span></div>
<div class="k" style="left:440.5px;top:229.4px;width:39.9px;height:24.6px"><span style="display:inline-block;transform:scaleX(0.915);">F7</span></div>
<div class="k" style="left:488.9px;top:229.4px;width:39.6px;height:24.6px"><span style="display:inline-block;transform:scaleX(0.915);">F8</span></div>
<div class="k" style="left:536.3px;top:229.4px;width:40.0px;height:24.6px"><span style="display:inline-block;transform:scaleX(0.915);">F9</span></div>
<div class="k" style="left:584.8px;top:229.4px;width:39.6px;height:24.6px"><span style="display:inline-block;transform:scaleX(0.945);">F10</span></div>
<div class="k" style="left:632.2px;top:229.4px;width:40.0px;height:24.6px"><span style="display:inline-block;transform:scaleX(0.987);">F11</span></div>
<div class="k" style="left:680.4px;top:229.4px;width:39.3px;height:24.6px"><span style="display:inline-block;transform:scaleX(0.945);">F12</span></div>
<div class="k" style="left:726.9px;top:229.4px;width:39.9px;height:24.6px"><b class=ar>←</b></div>
<div class="k" style="left:105px;top:262.6px;width:69.3px;height:24.6px"><span style="display:inline-block;transform:scaleX(0.939);">PrtScSysRq</span></div>
<div class="k" style="left:181.6px;top:262.6px;width:73.4px;height:24.6px"><span style="display:inline-block;transform:scaleX(0.998);">ScrollLock</span></div>
<div class="k" style="left:263.5px;top:262.6px;width:82.5px;height:24.6px"><span style="display:inline-block;transform:scaleX(0.961);">PauseBreak</span></div>
<div class="k" style="left:353.9px;top:262.6px;width:48.4px;height:24.6px"><span style="display:inline-block;transform:scaleX(1.025);">Insert</span></div>
<div class="k" style="left:410px;top:262.6px;width:56.4px;height:24.6px"><span style="display:inline-block;transform:scaleX(1.026);">Delete</span></div>
<div class="k" style="left:474.3px;top:262.6px;width:52.6px;height:24.6px"><span style="display:inline-block;transform:scaleX(1.044);">Home</span></div>
<div class="k" style="left:534.4px;top:262.6px;width:56.2px;height:24.6px"><span style="display:inline-block;transform:scaleX(0.997);">Page Up</span></div>
<div class="k" style="left:600.4px;top:262.6px;width:64.3px;height:24.6px"><span style="display:inline-block;transform:scaleX(1.012);">Page Down</span></div>
<div class="k" style="left:671.7px;top:262.6px;width:47.3px;height:24.6px"><span style="display:inline-block;transform:scaleX(0.971);">End</span></div>
<div class="k" style="left:727.8px;top:262.6px;width:39.3px;height:24.6px"><b class=ar>→</b></div>
<div class="k" style="left:105.4px;top:295.6px;width:39.3px;height:24.7px"><span style="position:relative;top:0.6px">~ <span style="margin-left:1.6px">、</span></span></div>
<div class="k" style="left:151.6px;top:295.6px;width:40.1px;height:24.7px"><span style="display:inline-block;transform:scaleX(1.026);">! 1</span></div>
<div class="k" style="left:199.4px;top:295.6px;width:39.6px;height:24.7px"><span style="display:inline-block;transform:scaleX(0.994);">@ 2</span></div>
<div class="k" style="left:247.6px;top:295.6px;width:39.9px;height:24.7px"><span style="display:inline-block;transform:scaleX(1.05);"># 3</span></div>
<div class="k" style="left:295.4px;top:295.6px;width:39.6px;height:24.7px"><span style="display:inline-block;transform:scaleX(1.011);">$ 4</span></div>
<div class="k" style="left:343px;top:295.6px;width:40.1px;height:24.7px"><span style="display:inline-block;transform:scaleX(0.984);">% 5</span></div>
<div class="k" style="left:391.2px;top:295.6px;width:39.3px;height:24.7px"><span style="display:inline-block;transform:scaleX(1.193);">^ 6</span></div>
<div class="k" style="left:438.8px;top:295.6px;width:40.0px;height:24.7px">& 7</div>
<div class="k" style="left:486.6px;top:295.6px;width:39.3px;height:24.7px"><span style="display:inline-block;transform:scaleX(1.046);">* 8</span></div>
<div class="k" style="left:534.4px;top:295.6px;width:39.3px;height:24.7px"><span style="display:inline-block;transform:scaleX(0.993);">( 9</span></div>
<div class="k" style="left:581.5px;top:295.6px;width:39.6px;height:24.7px"><span style="display:inline-block;transform:scaleX(0.993);">) 0</span></div>
<div class="k" style="left:631.2px;top:295.6px;width:39.3px;height:24.7px"><span style="position:relative;left:-2.6px;top:1.6px;font-weight:bold;color:#333;text-shadow:0 0.5px 0 #555">￣</span><span style="position:relative;top:-0.7px">-</span></div>
<div class="k" style="left:680.4px;top:295.6px;width:39.3px;height:24.7px"><span style="display:inline-block;transform:scaleX(1.072);"><span style="font-size:8.4px">+ =</span></span></div>
<div class="k" style="left:727.8px;top:295.6px;width:39.3px;height:24.7px"><b class=av>↑</b></div>
<div class="k" style="left:105.4px;top:328.7px;width:38.7px;height:24.7px">A</div>
<div class="k" style="left:151.6px;top:328.7px;width:40.1px;height:24.7px">B</div>
<div class="k" style="left:199.4px;top:328.7px;width:39.6px;height:24.7px">C</div>
<div class="k" style="left:247.6px;top:328.7px;width:39.9px;height:24.7px">D</div>
<div class="k" style="left:295.4px;top:328.7px;width:39.6px;height:24.7px">E</div>
<div class="k" style="left:343px;top:328.7px;width:40.1px;height:24.7px">F</div>
<div class="k" style="left:391.2px;top:328.7px;width:39.3px;height:24.7px">G</div>
<div class="k" style="left:438.8px;top:328.7px;width:40.0px;height:24.7px">H</div>
<div class="k" style="left:486.6px;top:328.7px;width:39.3px;height:24.7px">I</div>
<div class="k" style="left:534.4px;top:328.7px;width:39.3px;height:24.7px">J</div>
<div class="k" style="left:582.5px;top:328.7px;width:38.6px;height:24.7px">K</div>
<div class="k" style="left:631.2px;top:328.7px;width:39.3px;height:24.7px">L</div>
<div class="k" style="left:679.1px;top:328.7px;width:40.6px;height:24.7px">M</div>
<div class="k" style="left:727.8px;top:328.7px;width:39.3px;height:24.7px"><b class=av>↓</b></div>
<div class="k" style="left:106px;top:361.7px;width:39.7px;height:24.7px">N</div>
<div class="k" style="left:153px;top:361.7px;width:40.9px;height:24.7px">O</div>
<div class="k" style="left:199.4px;top:361.7px;width:42.0px;height:24.7px">P</div>
<div class="k" style="left:249.2px;top:361.7px;width:40.0px;height:24.7px">Q</div>
<div class="k" style="left:297px;top:361.7px;width:39.9px;height:24.7px">R</div>
<div class="k" style="left:345.1px;top:361.7px;width:39.9px;height:24.7px">S</div>
<div class="k" style="left:391.2px;top:361.7px;width:41.9px;height:24.7px">T</div>
<div class="k" style="left:440.5px;top:361.7px;width:39.8px;height:24.7px">U</div>
<div class="k" style="left:488.9px;top:361.7px;width:39.4px;height:24.7px">V</div>
<div class="k" style="left:536.3px;top:361.7px;width:40.0px;height:24.7px">W</div>
<div class="k" style="left:584.8px;top:361.7px;width:39.5px;height:24.7px">X</div>
<div class="k" style="left:632.2px;top:361.7px;width:40.1px;height:24.7px">Y</div>
<div class="k" style="left:678.1px;top:361.7px;width:41.6px;height:24.7px">Z</div>
<div class="k" style="left:727.8px;top:361.7px;width:38.5px;height:24.7px"><b class=mn>▤</b></div>
<div class="k" style="left:105.6px;top:394.9px;width:88.7px;height:24.7px"><span style="display:inline-block;transform:scaleX(1.045);">Tab</span></div>
<div class="k" style="left:199.5px;top:394.9px;width:89.7px;height:24.7px"><span style="display:inline-block;transform:scaleX(0.972);">CapsLock</span></div>
<div class="k" style="left:297px;top:394.9px;width:87.4px;height:24.7px"><span style="display:inline-block;transform:scaleX(0.993);">Enter</span></div>
<div class="k" style="left:391.2px;top:394.9px;width:39.3px;height:24.7px"><span style="display:inline-block;transform:scaleX(1.025);">{ [</span></div>
<div class="k" style="left:440.5px;top:394.9px;width:39.9px;height:24.7px"><span style="display:inline-block;transform:scaleX(1.025);">} ]</span></div>
<div class="k" style="left:488.9px;top:394.9px;width:39.6px;height:24.7px"><span style="display:inline-block;transform:scaleX(1.136);">| \</span></div>
<div class="k" style="left:536.3px;top:394.9px;width:39.3px;height:24.7px">:&nbsp;&nbsp;&nbsp; ;</div>
<div class="k" style="left:582.5px;top:394.9px;width:39.3px;height:24.7px">"&nbsp;&nbsp; '</div>
<div class="k" style="left:630.5px;top:394.9px;width:41.3px;height:24.7px">&lt;&nbsp; ,</div>
<div class="k" style="left:679.1px;top:394.9px;width:41.6px;height:24.7px">&gt;&nbsp; .</div>
<div class="k" style="left:726.9px;top:394.9px;width:39.9px;height:24.7px">?&nbsp; /</div>
<div class="k" style="left:105.6px;top:428.0px;width:56.2px;height:24.7px"><span style="display:inline-block;transform:scaleX(1.034);">Ctrl</span></div>
<div class="k" style="left:169.3px;top:428.0px;width:58.7px;height:24.7px"><span style="display:inline-block;transform:scaleX(1.035);">Shift</span></div>
<div class="k" style="left:235.3px;top:428.0px;width:53.9px;height:24.7px"><span style="display:inline-block;transform:scaleX(1.092);">Alt</span></div>
<div class="k" style="left:297px;top:428.0px;width:70.2px;height:24.7px"><span style="display:inline-block;transform:scaleX(1.051);">Win</span></div>
<div class="k" style="left:374px;top:428.0px;width:68.1px;height:24.7px"><span style="display:inline-block;transform:scaleX(0.958);">Space</span></div>
<div class="k" style="left:450.2px;top:428.0px;width:83.8px;height:24.7px"><b class=ab>←</b>Backspace</div>
<div class="k" style="left:541.9px;top:428.0px;width:56.1px;height:24.7px"><span style="display:inline-block;transform:scaleX(1.068);"><span style="font-size:8.6px">+</span></span></div>
<div class="k" style="left:606.1px;top:428.0px;width:47.7px;height:24.7px">-</div>
<div class="k" style="left:660.7px;top:428.0px;width:48.6px;height:24.7px">×</div>
<div class="k" style="left:717.1px;top:428.0px;width:49.7px;height:24.7px">÷</div>
<div class="k" style="left:105.6px;top:461.1px;width:88.1px;height:24.7px"><span style="display:inline-block;transform:scaleX(1.031);">NumLock</span></div>
<div class="k" style="left:201px;top:461.1px;width:39.3px;height:24.7px">1</div>
<div class="k" style="left:247.6px;top:461.1px;width:39.9px;height:24.7px">2</div>
<div class="k" style="left:295.4px;top:461.1px;width:39.6px;height:24.7px">3</div>
<div class="k" style="left:343.1px;top:461.1px;width:40.0px;height:24.7px">4</div>
<div class="k" style="left:391.2px;top:461.1px;width:39.3px;height:24.7px">5</div>
<div class="k" style="left:438.8px;top:461.1px;width:40.0px;height:24.7px">6</div>
<div class="k" style="left:486.6px;top:461.1px;width:39.3px;height:24.7px">7</div>
<div class="k" style="left:534.4px;top:461.1px;width:39.3px;height:24.7px">8</div>
<div class="k" style="left:581.5px;top:461.1px;width:39.6px;height:24.7px">9</div>
<div class="k" style="left:630.4px;top:461.1px;width:39.7px;height:24.7px">0</div>
<div class="k" style="left:677.1px;top:461.1px;width:39.7px;height:24.7px">·</div>
<div class="k" style="left:725.2px;top:461.1px;width:40.0px;height:24.7px"><span style="display:inline-block;transform:scaleX(0.966);">NULL</span></div>
</body></html>
